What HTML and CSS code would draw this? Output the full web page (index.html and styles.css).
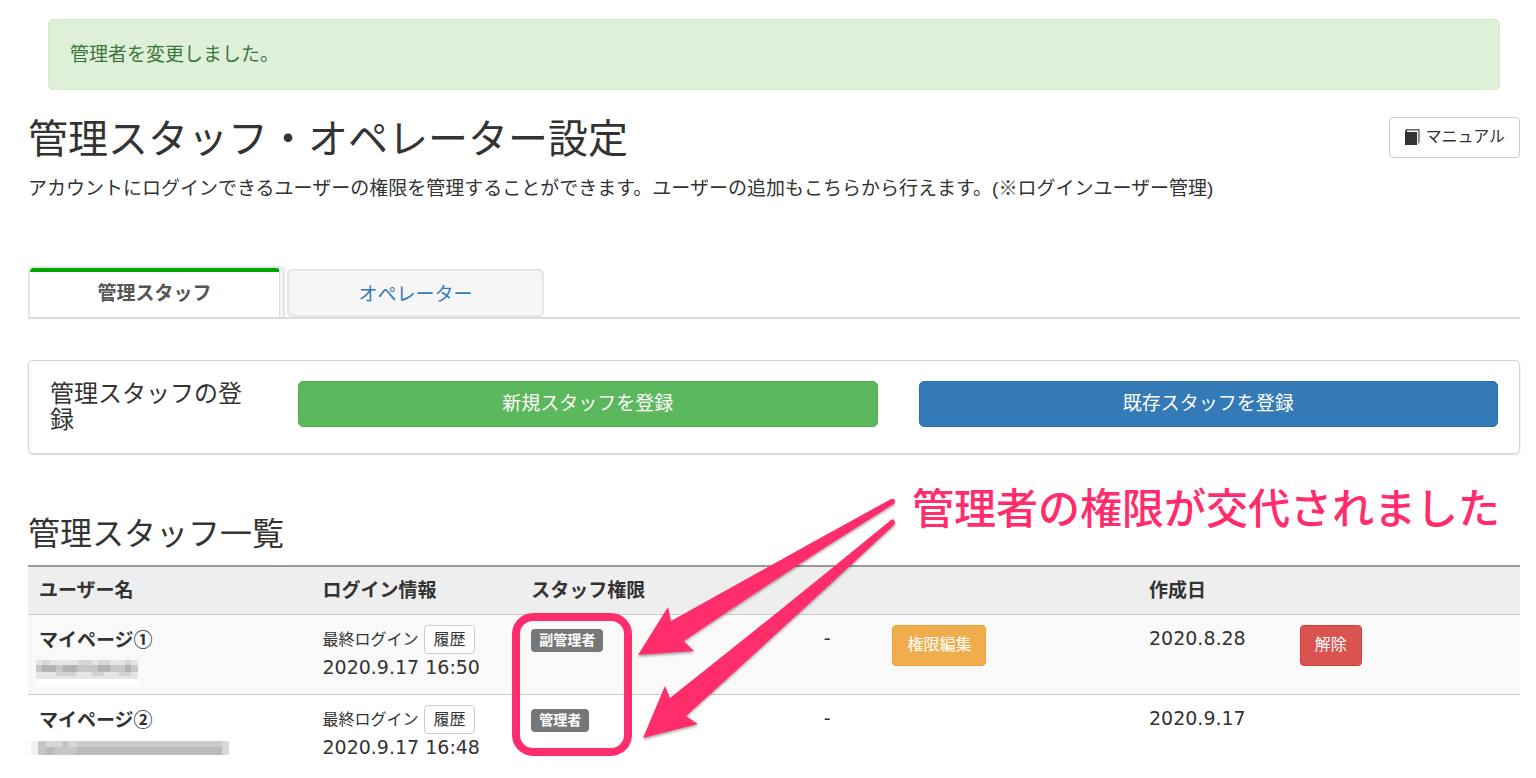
FILE: index.html
```html
<!DOCTYPE html>
<html lang="ja">
<head>
    <meta charset="UTF-8">
    <meta name="viewport" content="width=device-width, initial-scale=1.0">
    <title>管理スタッフ・オペレーター設定</title>
    <link rel="stylesheet" href="styles.css">
</head>
<body>
    <div class="alert" role="status">管理者を変更しました。</div>

    <header class="page-header">
        <div>
            <h1>管理スタッフ・オペレーター設定</h1>
            <p class="lead">アカウントにログインできるユーザーの権限を管理することができます。ユーザーの追加もこちらから行えます。(※ログインユーザー管理)</p>
        </div>
        <button class="btn btn-default" type="button">
            <svg class="icon-book" viewBox="0 0 16 18" width="16" height="18" aria-hidden="true">
                <path d="M1 17V4Q1 1 4 1H14.5Q15.5 1 15.5 2V14.5L14 16V3H4Q2.5 3 2.5 4H13V17Z" fill="#333"/>
                <path d="M3 3.2L4.2 2.2H14V15" fill="none" stroke="#ddd" stroke-width="1"/>
            </svg>
            マニュアル
        </button>
    </header>

    <nav class="tabs">
        <div class="tab active"><a href="#staff">管理スタッフ</a></div>
        <div class="tab"><a href="#operator">オペレーター</a></div>
    </nav>

    <section class="panel">
        <h4>管理スタッフの登録</h4>
        <div class="panel-actions">
            <button class="btn btn-success btn-block" type="button">新規スタッフを登録</button>
            <button class="btn btn-primary btn-block" type="button">既存スタッフを登録</button>
        </div>
    </section>

    <section class="staff" id="staff">
        <h2>管理スタッフ一覧</h2>
        <table>
            <colgroup>
                <col class="col-user">
                <col class="col-login">
                <col class="col-role">
                <col class="col-dash">
                <col class="col-edit">
                <col class="col-date">
                <col>
            </colgroup>
            <thead>
                <tr>
                    <th>ユーザー名</th>
                    <th>ログイン情報</th>
                    <th>スタッフ権限</th>
                    <th></th>
                    <th></th>
                    <th>作成日</th>
                    <th></th>
                </tr>
            </thead>
            <tbody>
                <tr>
                    <td>
                        <strong>マイページ①</strong>
                        <svg class="mosaic" viewBox="0 0 208 26" width="208" height="26" aria-hidden="true">
                            <path d="M5 19h102v6H5z" fill="#fff"/>
                            <path d="M5 0h102v19H5z" fill="#e6e6e6"/>
                            <path d="M5 5h102v7H5z" fill="#c6c6c6"/>
                            <path d="M11 5h14v7H11zM32 5h14v7H32zM67 5h12v7H67zM94 5h6v7h-6z" fill="#b2b2b2"/>
                            <path d="M11 0h8v5h-8zM47 0h14v5H47zM67 0h12v5H67zM94 0h6v5h-6z" fill="#d6d6d6"/>
                            <path d="M25 12h20v4H25zM61 12h12v4H61zM88 12h12v4H88z" fill="#d2d2d2"/>
                        </svg>
                    </td>
                    <td>
                        <div class="login"><small>最終ログイン</small> <button class="btn btn-xs" type="button">履歴</button></div>
                        <div class="time">2020.9.17 16:50</div>
                    </td>
                    <td><span class="label">副管理者</span></td>
                    <td>-</td>
                    <td><button class="btn btn-sm btn-warning" type="button">権限編集</button></td>
                    <td>2020.8.28</td>
                    <td><button class="btn btn-sm btn-danger" type="button">解除</button></td>
                </tr>
                <tr>
                    <td>
                        <strong>マイページ②</strong>
                        <svg class="mosaic" viewBox="0 0 208 26" width="208" height="26" aria-hidden="true">
                            <path d="M0 1h7v14H0z" fill="#f2f2f2"/>
                            <path d="M7 1h184v14H7z" fill="#c6c6c6"/>
                            <path d="M15 1h16v6H15zM38 1h8v6h-8z" fill="#d8d8d8"/>
                            <path d="M46 1h145v6H46z" fill="#cbcbcb"/>
                            <path d="M15 7h8v8h-8zM46 7h145v8H46z" fill="#bababa"/>
                            <path d="M191 1h7v14h-7z" fill="#d8d8d8"/>
                        </svg>
                    </td>
                    <td>
                        <div class="login"><small>最終ログイン</small> <button class="btn btn-xs" type="button">履歴</button></div>
                        <div class="time">2020.9.17 16:48</div>
                    </td>
                    <td><span class="label">管理者</span></td>
                    <td>-</td>
                    <td></td>
                    <td>2020.9.17</td>
                    <td></td>
                </tr>
            </tbody>
        </table>

        <!-- callout drawn over the table -->
        <div class="callout-box"></div>
        <svg class="callout-arrows" viewBox="0 0 270 250" width="270" height="250" aria-hidden="true">
            <path d="M8 165L38 117L41 131Q150 70 261 9Q264 8 265 11Q265 14 262 15Q155 82 54 151L64 161Z"/>
            <path d="M13 248L35 196L40 208Q150 121 261 30Q264 28 265 32Q265 34 264 35Q160 132 56 226L68 234Z"/>
        </svg>
        <p class="callout-text">管理者の権限が交代されました</p>
    </section>
</body>
</html>
```
FILE: styles.css
```css
* {
    box-sizing: border-box;
}
body {
    margin: 0;
    padding: 19px 16px 0 28px;
    font-family: "DejaVu Sans", "Noto Sans CJK JP", sans-serif;
    font-size: 19px;
    line-height: 27px;
    color: #333;
    background-color: #fff;
}
h1, h2, h4, p {
    margin: 0;
    font-weight: normal;
}
.alert {
    margin: 0 20px;
    padding: 21px;
    border: 1px solid #d6e9c6;
    border-radius: 5px;
    background-color: #dff0d8;
    color: #3c763d;
}

/* header */
.page-header {
    display: flex;
    justify-content: space-between;
    align-items: flex-start;
    padding-top: 27px;
}
h1 {
    font-size: 40px;
    line-height: 44px;
}
.lead {
    margin-top: 14px;
    font-family: "Liberation Sans", "Noto Sans CJK JP", sans-serif;
}

/* buttons */
.btn {
    border: 1px solid #ccc;
    border-radius: 4px;
    background-color: #fff;
    color: #333;
    font-family: inherit;
    font-size: 16px;
    line-height: 24px;
    white-space: nowrap;
    cursor: pointer;
}
.btn-default {
    display: flex;
    align-items: center;
    gap: 5px;
    height: 41px;
    padding: 0 14px 2px;
}
.btn-block {
    flex: 1;
    height: 46px;
    padding-bottom: 3px;
    border-radius: 5px;
    font-size: 19px;
}
.btn-sm {
    height: 41px;
    padding: 0 14px 2px;
    color: #fff;
}
.btn-xs {
    height: 29px;
    padding: 0 8px;
}
.btn-success {
    background-color: #5cb85c;
    border-color: #4cae4c;
    color: #fff;
}
.btn-primary {
    background-color: #337ab7;
    border-color: #2e6da4;
    color: #fff;
}
.btn-warning {
    background-color: #f0ad4e;
    border-color: #eea236;
}
.btn-danger {
    background-color: #d9534f;
    border-color: #d43f3a;
}

/* tabs */
.tabs {
    display: flex;
    align-items: flex-end;
    gap: 2px;
    margin-top: 64px;
    border-bottom: 2px solid #ddd;
}
.tab {
    width: 257px;
    border: 2px solid #e5e5e5;
    border-radius: 5px;
    background-color: #f6f6f6;
    text-align: center;
}
.tab a {
    display: block;
    padding: 10px 0 7px;
    color: #337ab7;
    text-decoration: none;
}
.tab.active {
    padding-right: 3px;
    border-bottom: 0;
    border-radius: 5px 5px 0 0;
}
.tab.active a {
    padding: 8px 0 10px;
    border-top: 4px solid #00a600;
    border-right: 1px solid #ddd;
    border-radius: 4px 4px 0 0;
    background-color: #fff;
    color: #555;
    font-weight: bold;
}

/* register panel */
.panel {
    display: flex;
    align-items: flex-start;
    margin-top: 41px;
    padding: 20px 21px;
    min-height: 94px;
    border: 1px solid #d2d2d2;
    border-radius: 5px;
    box-shadow: 0 1px 2px rgba(0,0,0,0.15);
}
.panel h4 {
    width: 248px;
    padding-right: 41px;
    font-size: 24px;
    line-height: 26px;
}
.panel-actions {
    display: flex;
    flex: 1;
    gap: 41px;
}

/* staff list */
.staff {
    position: relative;
    margin-top: 62px;
}
h2 {
    font-size: 32px;
    line-height: 36px;
}
table {
    width: 100%;
    margin-top: 13px;
    border-collapse: collapse;
    table-layout: fixed;
}
.col-user {
    width: 19%;
}
.col-login {
    width: 14%;
}
.col-role {
    width: 19.6%;
}
.col-dash {
    width: 4.6%;
}
.col-edit {
    width: 17.2%;
}
.col-date {
    width: 10.1%;
}
th, td {
    padding: 10px 11px;
    text-align: left;
    vertical-align: top;
}
th {
    border-top: 2px solid #999;
    border-bottom: 1px solid #ccc;
    background-color: #eee;
}
td {
    height: 80px;
}
tbody tr:first-child {
    background-color: #f9f9f9;
    border-bottom: 1px solid #ccc;
}
td strong {
    font-family: "Noto Sans CJK JP", sans-serif;
}
.login {
    display: flex;
    align-items: center;
    gap: 6px;
    height: 29px;
}
.login small {
    font-size: 16px;
}
.mosaic {
    display: block;
    margin: 6px 0 -8px -8px;
}
.label {
    display: inline-block;
    margin-top: 3px;
    padding: 0 8px;
    border-radius: 4px;
    background-color: #777;
    color: #fff;
    font-size: 14px;
    font-weight: bold;
    line-height: 23px;
}

/* callout over the list */
.callout-box {
    position: absolute;
    top: 97px;
    left: 484px;
    width: 120px;
    height: 143px;
    border: 8px solid #ff2d6c;
    border-radius: 21px;
}
.callout-arrows {
    position: absolute;
    top: -26px;
    left: 602px;
    fill: #ff2d6c;
    filter: drop-shadow(0 2px 1px rgba(0,0,0,0.3));
}
.callout-text {
    position: absolute;
    top: -36px;
    left: 884px;
    color: #ff2d6c;
    font-size: 42px;
    font-weight: 500;
    line-height: 60px;
    white-space: nowrap;
}
```
